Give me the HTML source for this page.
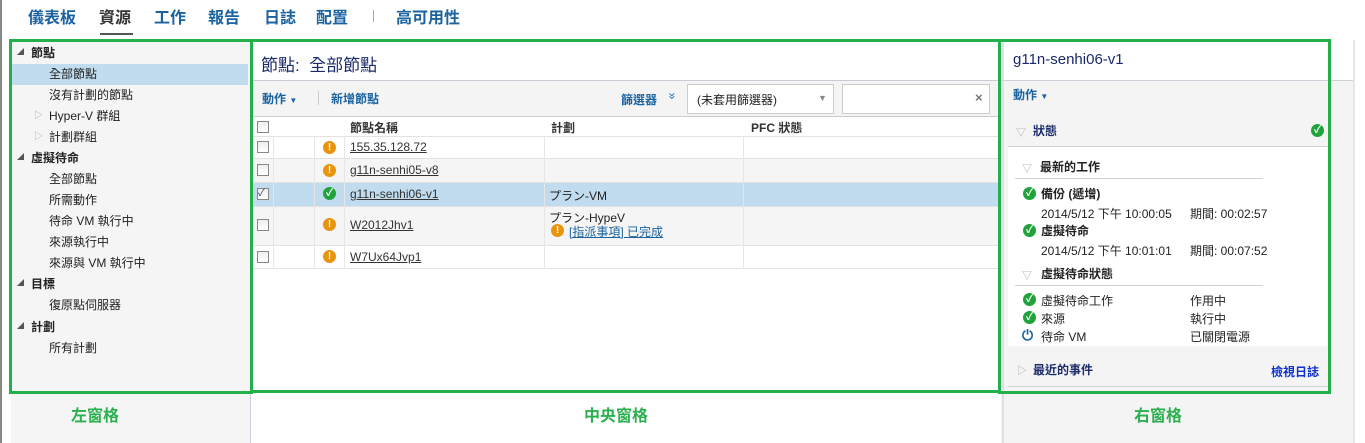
<!DOCTYPE html>
<html><head><meta charset="utf-8"><style>
*{margin:0;padding:0;box-sizing:border-box}
body{width:1365px;height:443px;overflow:hidden;background:#fff;position:relative;font-family:"Liberation Sans","Noto Sans CJK TC",sans-serif;font-size:12px;color:#222}
.a{position:absolute;white-space:nowrap}
.nav{top:4px;font-size:16px;font-weight:bold;color:#1b63a0}
.g{position:absolute;border:3px solid #22b04b}
.b{font-weight:bold}
.cb{position:absolute;width:12px;height:12px;border:1px solid #888;background:linear-gradient(#eee,#fff)}
.ic{position:absolute;width:13px;height:13px;border-radius:50%;color:#fff;font-size:10px;font-weight:bold;text-align:center;line-height:13px}
.w{background:#e8950d}
.ok{background:#1fa33a}
.hl{position:absolute;height:1px;background:#e2e2e2}
.vl{position:absolute;width:1px;background:#e6e6e6}
a{color:#333;text-decoration:underline}
.tr{position:absolute;font-size:7px;color:#555}
</style></head><body>
<div class="a" style="left:0;top:0;width:2px;height:443px;background:#888"></div>
<span class="a nav" style="left:28px">儀表板</span>
<span class="a nav" style="left:99px;color:#333">資源</span>
<div class="a" style="left:100px;top:33px;width:33px;height:2px;background:#555"></div>
<span class="a nav" style="left:154px">工作</span>
<span class="a nav" style="left:208px">報告</span>
<span class="a nav" style="left:264px">日誌</span>
<span class="a nav" style="left:316px">配置</span>
<div class="a" style="left:373px;top:10px;width:1px;height:12px;background:#aaa"></div>
<span class="a nav" style="left:396px">高可用性</span>

<div class="a" style="left:11px;top:40px;width:240px;height:403px;background:#f5f5f5;border-right:1px solid #ccd"></div>
<div class="a" style="left:12px;top:64px;width:236px;height:21px;background:#c0dcee"></div>
<span class="tr" style="left:17px;top:47px">◢</span><span class="a b" style="left:31px;top:44px">節點</span>
<span class="a" style="left:49px;top:65px">全部節點</span>
<span class="a" style="left:49px;top:86px">沒有計劃的節點</span>
<span class="a" style="left:34px;top:108px;color:#aaa;font-size:9px">▷</span><span class="a" style="left:49px;top:107px">Hyper-V 群組</span>
<span class="a" style="left:34px;top:129px;color:#aaa;font-size:9px">▷</span><span class="a" style="left:49px;top:128px">計劃群組</span>
<span class="tr" style="left:17px;top:152px">◢</span><span class="a b" style="left:31px;top:149px">虛擬待命</span>
<span class="a" style="left:49px;top:170px">全部節點</span>
<span class="a" style="left:49px;top:191px">所需動作</span>
<span class="a" style="left:49px;top:212px">待命 VM 執行中</span>
<span class="a" style="left:49px;top:233px">來源執行中</span>
<span class="a" style="left:49px;top:254px">來源與 VM 執行中</span>
<span class="tr" style="left:17px;top:278px">◢</span><span class="a b" style="left:31px;top:275px">目標</span>
<span class="a" style="left:49px;top:296px">復原點伺服器</span>
<span class="tr" style="left:17px;top:321px">◢</span><span class="a b" style="left:31px;top:318px">計劃</span>
<span class="a" style="left:49px;top:339px">所有計劃</span>

<span class="a" style="left:261px;top:51px;font-size:17px;color:#1a2a6a">節點:&nbsp; 全部節點</span>
<div class="a" style="left:252px;top:80px;width:747px;height:37px;background:#f4f4f4;border-top:1px solid #c8ccd4;border-bottom:1px solid #c8ccd4"></div>
<span class="a b" style="left:262px;top:90px;color:#1b63a0">動作 <span style="font-size:8px">▼</span></span>
<div class="a" style="left:318px;top:91px;width:1px;height:14px;background:#ccc"></div>
<span class="a b" style="left:331px;top:90px;color:#1b63a0">新增節點</span>
<span class="a b" style="left:621px;top:91px;color:#1b63a0">篩選器</span>
<span class="a" style="left:669px;top:89px;color:#1b63a0;font-size:12px;transform:rotate(90deg)">»</span>
<div class="a" style="left:687px;top:84px;width:147px;height:30px;background:#fff;border:1px solid #ccc"></div>
<span class="a" style="left:697px;top:91px">(未套用篩選器)</span>
<span class="a" style="left:818px;top:93px;color:#888;font-size:9px">▼</span>
<div class="a" style="left:842px;top:84px;width:148px;height:30px;background:#fff;border:1px solid #ccc"></div>
<span class="a b" style="left:975px;top:90px;color:#777;font-size:13px">×</span>

<div class="a" style="left:252px;top:158px;width:747px;height:24px;background:#f5f5f5"></div>
<div class="a" style="left:252px;top:182px;width:747px;height:24px;background:#c0dcee"></div>
<div class="a" style="left:252px;top:206px;width:747px;height:39px;background:#f5f5f5"></div>
<div class="hl" style="left:252px;top:136px;width:747px"></div>
<div class="hl" style="left:252px;top:158px;width:747px"></div>
<div class="hl" style="left:252px;top:182px;width:747px"></div>
<div class="hl" style="left:252px;top:206px;width:747px"></div>
<div class="hl" style="left:252px;top:245px;width:747px"></div>
<div class="hl" style="left:252px;top:268px;width:747px"></div>
<div class="vl" style="left:273px;top:136px;height:132px"></div>
<div class="vl" style="left:314px;top:136px;height:132px"></div>
<div class="vl" style="left:344px;top:136px;height:132px"></div>
<div class="vl" style="left:544px;top:136px;height:132px"></div>
<div class="vl" style="left:743px;top:136px;height:132px"></div>
<div class="cb" style="left:257px;top:121px"></div>
<span class="a b" style="left:350px;top:119px;color:#333">節點名稱</span>
<span class="a b" style="left:551px;top:119px;color:#333">計劃</span>
<span class="a b" style="left:751px;top:119px;color:#333">PFC 狀態</span>

<div class="cb" style="left:257px;top:141px"></div><div class="ic w" style="left:323px;top:141px">!</div><a class="a" style="left:350px;top:140px">155.35.128.72</a>
<div class="cb" style="left:257px;top:164px"></div><div class="ic w" style="left:323px;top:164px">!</div><a class="a" style="left:350px;top:163px">g11n-senhi05-v8</a>
<div class="cb" style="left:257px;top:188px;font-size:10px;line-height:10px;color:#336">✓</div><div class="ic ok" style="left:323px;top:187px">✓</div><a class="a" style="left:350px;top:187px">g11n-senhi06-v1</a><span class="a" style="left:549px;top:187px">プラン-VM</span>
<div class="cb" style="left:257px;top:219px"></div><div class="ic w" style="left:323px;top:218px">!</div><a class="a" style="left:350px;top:218px">W2012Jhv1</a><span class="a" style="left:549px;top:209px">プラン-HypeV</span>
<div class="ic w" style="left:551px;top:224px">!</div><a class="a" style="left:569px;top:223px;color:#1b63a0">[指派事項] 已完成</a>
<div class="cb" style="left:257px;top:251px"></div><div class="ic w" style="left:323px;top:250px">!</div><a class="a" style="left:350px;top:250px">W7Ux64Jvp1</a>

<div class="a" style="left:1001px;top:80px;width:352px;height:363px;background:#f4f4f4"></div>
<div class="a" style="left:1001px;top:80px;width:352px;height:1px;background:#ccd2da"></div>
<div class="a" style="left:1353px;top:40px;width:2px;height:403px;background:#e6e6e6"></div>
<div class="a" style="left:1002px;top:40px;width:2px;height:403px;background:#dde0e6"></div>
<span class="a" style="left:1013px;top:51px;font-size:15px;color:#1a2a6a">g11n-senhi06-v1</span>
<span class="a b" style="left:1013px;top:86px;color:#1b63a0">動作 <span style="font-size:8px">▼</span></span>
<span class="a" style="left:1016px;top:124px;color:#aaa;font-size:10px">▽</span><span class="a b" style="left:1033px;top:122px;color:#1a2a6a">狀態</span>
<div class="ic ok" style="left:1311px;top:124px">✓</div>
<div class="a" style="left:1008px;top:146px;width:321px;height:200px;background:#fff;border-top:1px solid #ccd2da"></div>
<span class="a" style="left:1022px;top:160px;color:#aaa;font-size:10px">▽</span><span class="a b" style="left:1040px;top:158px">最新的工作</span>
<div class="a" style="left:1015px;top:178px;width:248px;height:1px;background:#ccd2da"></div>
<div class="ic ok" style="left:1023px;top:187px">✓</div><span class="a b" style="left:1041px;top:185px">備份 (遞增)</span>
<span class="a" style="left:1041px;top:205px">2014/5/12 下午 10:00:05</span><span class="a" style="left:1190px;top:205px">期間: 00:02:57</span>
<div class="ic ok" style="left:1023px;top:224px">✓</div><span class="a b" style="left:1041px;top:222px">虛擬待命</span>
<span class="a" style="left:1041px;top:242px">2014/5/12 下午 10:01:01</span><span class="a" style="left:1190px;top:242px">期間: 00:07:52</span>
<span class="a" style="left:1022px;top:267px;color:#aaa;font-size:10px">▽</span><span class="a b" style="left:1041px;top:265px">虛擬待命狀態</span>
<div class="a" style="left:1015px;top:285px;width:248px;height:1px;background:#ccd2da"></div>
<div class="ic ok" style="left:1023px;top:293px">✓</div><span class="a" style="left:1041px;top:292px">虛擬待命工作</span><span class="a" style="left:1190px;top:292px">作用中</span>
<div class="ic ok" style="left:1023px;top:311px">✓</div><span class="a" style="left:1041px;top:310px">來源</span><span class="a" style="left:1190px;top:310px">執行中</span>
<span class="a b" style="left:1022px;top:327px;color:#1b63a0;font-size:14px">⏻</span><span class="a" style="left:1041px;top:328px">待命 VM</span><span class="a" style="left:1190px;top:328px">已關閉電源</span>
<span class="a" style="left:1017px;top:362px;color:#aaa;font-size:10px">▷</span><span class="a b" style="left:1033px;top:361px;color:#1a2a6a">最近的事件</span>
<span class="a b" style="left:1271px;top:363px;color:#1030d0">檢視日誌</span>
<div class="a" style="left:1008px;top:386px;width:321px;height:1px;background:#ccd2da"></div>

<div class="g" style="left:9px;top:39px;width:244px;height:355px"></div>
<div class="g" style="left:250px;top:39px;width:751px;height:354px"></div>
<div class="g" style="left:998px;top:39px;width:333px;height:355px"></div>
<span class="a b" style="left:71px;top:402px;font-size:16px;color:#2ab04e">左窗格</span>
<span class="a b" style="left:584px;top:402px;font-size:16px;color:#2ab04e">中央窗格</span>
<span class="a b" style="left:1134px;top:402px;font-size:16px;color:#2ab04e">右窗格</span>
</body></html>
